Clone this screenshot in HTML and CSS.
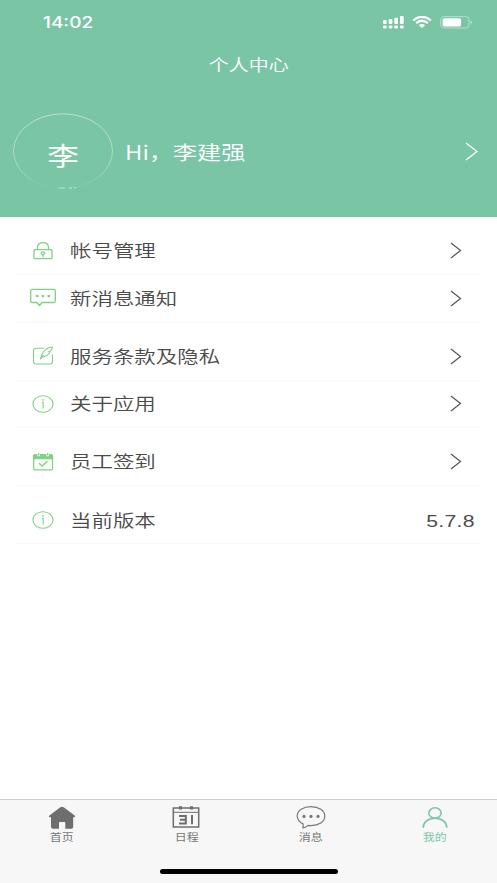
FILE: index.html
```html
<!DOCTYPE html>
<html lang="zh-CN">
<head>
<meta charset="utf-8">
<title>个人中心</title>
<link rel="stylesheet" href="styles.css">
</head>
<body>
<div class="app">
  <header class="header">
    <div class="status">
      <span class="wide left time">14:02</span>
      <div class="status-icons">
        <svg class="signal" width="22" height="13" viewBox="0 0 22 13" fill="#fff"><rect x="0" y="4" width="3.7" height="4" rx="1"/><rect x="5.7" y="3" width="3.7" height="5" rx="1"/><rect x="11.3" y="1.7" width="3.7" height="6.3" rx="1"/><rect x="17" y="0" width="3.7" height="8" rx="1"/><rect x="0" y="9.4" width="3.7" height="3.2" rx="1"/><rect x="5.7" y="9.4" width="3.7" height="3.2" rx="1"/><rect x="11.3" y="9.4" width="3.7" height="3.2" rx="1"/><rect x="17" y="9.4" width="3.7" height="3.2" rx="1"/></svg>
        <svg class="wifi" width="20" height="13" viewBox="0 0 20 13"><path d="M1.2 4.5Q10-3 18.8 4.5M4.2 7.1Q10 2.4 15.8 7.1" fill="none" stroke="#fff" stroke-width="2.2"/><path d="M6.8 9.2Q10 6.6 13.2 9.2L10 12Z" fill="#fff"/></svg>
        <svg class="battery" width="33" height="13" viewBox="0 0 33 13"><rect x=".6" y=".6" width="28.4" height="11.4" rx="3.3" fill="none" stroke="#b6dfcf" stroke-width="1"/><rect x="2.6" y="2.2" width="18.5" height="8.2" rx="1.6" fill="#fff"/><path d="M30.5 4.3q3 2 0 4z" fill="#b6dfcf"/></svg>
      </div>
    </div>
    <h1 class="title"><span class="wide">个人中心</span></h1>
    <div class="profile">
      <div class="avatar">
        <svg class="ring" width="101" height="76" viewBox="0 0 101 76" fill="none"><ellipse cx="50" cy="38" rx="49.5" ry="37.2" stroke="url(#fade)"/><path d="M46 75h6M56 75h3M61 74.7h2" stroke="#c2e4d7"/><defs><linearGradient id="fade" x1="0" y1="0" x2="0" y2="1"><stop offset="0" stop-color="#b8e0d0"/><stop offset=".75" stop-color="#a6d8c4"/><stop offset="1" stop-color="#7bc5a7"/></linearGradient></defs></svg>
        <span class="wide">李</span>
      </div>
      <span class="wide left greeting">Hi，李建强</span>
      <svg class="arrow light" width="13" height="19" viewBox="0 0 13 19"><path d="M1 1L12 9.4L1 18"/></svg>
    </div>
  </header>
  <main class="menu">
    <section class="group">
      <div class="row">
        <svg class="icon" width="28" height="22" viewBox="0 0 28 22"><rect x="5" y="9.7" width="18" height="9" rx="1"/><path d="M8.5 9.7V7.8C8.5 4.4 10.7 2.6 14 2.6S19.5 4.4 19.5 7.8V9.7M14 14.7v2.5"/><ellipse cx="14" cy="13.3" rx="1.8" ry="1.4"/></svg>
        <span class="wide left label">帐号管理</span>
        <svg class="arrow" width="12" height="17" viewBox="0 0 12 17"><path d="M1 1L10.5 8.5L1 16"/></svg>
      </div>
      <div class="row">
        <svg class="icon" width="28" height="22" viewBox="0 0 28 22"><path d="M3.5 2.4H24.5Q26.3 2.4 26.3 4.2V13.8Q26.3 15.5 24.5 15.5H13.4L10.4 18.5L7.7 15.5H3.5Q1.7 15.5 1.7 13.8V4.2Q1.7 2.4 3.5 2.4Z"/><g class="solid"><circle cx="8.2" cy="9.1" r="1.4"/><circle cx="14" cy="9.1" r="1.4"/><circle cx="19.8" cy="9.1" r="1.4"/></g></svg>
        <span class="wide left label">新消息通知</span>
        <svg class="arrow" width="12" height="17" viewBox="0 0 12 17"><path d="M1 1L10.5 8.5L1 16"/></svg>
      </div>
    </section>
    <section class="group">
      <div class="row">
        <svg class="icon thin" width="28" height="22" viewBox="0 0 28 22"><path d="M15 3.2H7.2Q4.5 3.2 4.5 5.5V16.5Q4.5 19 7.2 19H20.7Q23.5 19 23.5 16.5V9.5"/><path d="M11.2 14.3C12.5 9 15.5 2.4 23.2 2Q23.5 4 21.5 6L20 6.5L20.7 7.5C18.5 11 15.5 12 12.3 12.2M11.2 14.3L14.5 10"/></svg>
        <span class="wide left label">服务条款及隐私</span>
        <svg class="arrow" width="12" height="17" viewBox="0 0 12 17"><path d="M1 1L10.5 8.5L1 16"/></svg>
      </div>
      <div class="row">
        <svg class="icon thin" width="28" height="22" viewBox="0 0 28 22"><ellipse cx="14" cy="11" rx="10" ry="8.3"/><path d="M13 9.2H14.2V15.4"/><circle class="solid" cx="14" cy="6.8" r=".9"/></svg>
        <span class="wide left label">关于应用</span>
        <svg class="arrow" width="12" height="17" viewBox="0 0 12 17"><path d="M1 1L10.5 8.5L1 16"/></svg>
      </div>
    </section>
    <section class="group">
      <div class="row">
        <svg class="icon" width="28" height="22" viewBox="0 0 28 22"><rect x="4.7" y="3.8" width="18.8" height="15" rx="1.2"/><path class="solid" d="M4 5Q4 3.2 5.5 3.2H22.5Q24.1 3.2 24.1 5V8.2H4Z"/><path d="M9.5 2V5.2M18.7 2V5.2" stroke="#fff" stroke-width="2.6"/><path d="M9.5 2V4.6M18.7 2V4.6"/><path d="M10 12.3L13 15L18.5 10.3" stroke-width="1.5"/></svg>
        <span class="wide left label">员工签到</span>
        <svg class="arrow" width="12" height="17" viewBox="0 0 12 17"><path d="M1 1L10.5 8.5L1 16"/></svg>
      </div>
    </section>
    <section class="group">
      <div class="row">
        <svg class="icon thin" width="28" height="22" viewBox="0 0 28 22"><ellipse cx="14" cy="11" rx="10" ry="8.3"/><path d="M13 9.2H14.2V15.4"/><circle class="solid" cx="14" cy="6.8" r=".9"/></svg>
        <span class="wide left label">当前版本</span>
        <span class="wide right version">5.7.8</span>
      </div>
    </section>
  </main>
  <footer class="bottom">
    <nav class="tabs">
      <div class="tab">
        <svg width="30" height="24" viewBox="0 0 30 24"><path d="M15 .7Q15.8.7 17 1.5L27.7 9.6Q29 11 27 11.2H26.2V21Q26.2 22.7 24.3 22.7H18.3V17Q18.3 16 17.3 16H13Q12 16 12 17V22.7H6Q4 22.7 4 21V11.2H3Q1 11 2.4 9.6L13 1.5Q14.2.7 15 .7Z" fill="#6e6e6e"/></svg>
        <span class="wide">首页</span>
      </div>
      <div class="tab">
        <svg width="30" height="24" viewBox="0 0 30 24" fill="none" stroke="#6e6e6e"><rect x="2.3" y="2" width="25.4" height="19" stroke-width="1.5"/><path d="M2 6.3H28" stroke-width="1"/><path d="M9.5.3V3.6M20.5.3V3.6" stroke-width="3"/><path d="M8 9.9H14.8V17.5H8M9 13.7H14.8M21 9V18.2" stroke-width="2"/></svg>
        <span class="wide">日程</span>
      </div>
      <div class="tab">
        <svg width="30" height="24" viewBox="0 0 30 24" fill="none" stroke="#777" stroke-width="1.2"><path d="M7.2 18.1C3.6 16.1 1.2 13.5 1.2 10C1.2 4.3 7.3.7 15 .7S28.8 4.5 28.8 10.2S22.8 19.6 15 19.6Q13.4 19.6 12.2 19.4Q9.9 21.5 7 22Z"/><g fill="#777" stroke="none"><circle cx="8" cy="10.4" r="1.6"/><circle cx="15" cy="10.4" r="1.6"/><circle cx="22" cy="10.4" r="1.6"/></g></svg>
        <span class="wide">消息</span>
      </div>
      <div class="tab active">
        <svg width="30" height="24" viewBox="0 0 30 24" fill="none" stroke="#7bc5a7" stroke-width="1.6"><ellipse cx="15" cy="7" rx="6.2" ry="5.2"/><path d="M3.2 21.8C3.2 16.3 8 12.3 15 12.3S26.8 16.3 26.8 21.8"/></svg>
        <span class="wide">我的</span>
      </div>
    </nav>
    <div class="home-bar"></div>
  </footer>
</div>
</body>
</html>
```
FILE: styles.css
```css
* { box-sizing: border-box; }
body {
  margin: 0;
  background: #fff;
  font-family: "Liberation Sans", "Noto Sans CJK SC", sans-serif;
  font-weight: 400;
}
svg { display: block; flex: none; }
.app { height: 883px; display: flex; flex-direction: column; overflow: hidden; }

/* Lettering is wider than it is tall throughout */
.wide { display: inline-block; transform: scaleX(1.219); white-space: nowrap; }
.left { transform-origin: left center; }
.right { transform-origin: right center; }

.header { height: 217px; flex: none; background: #7bc5a7; color: #fff; }
.status { height: 44px; display: flex; justify-content: space-between; padding: 0 24px 0 43px; align-items: center; }
.time { font: 500 15.6px/20px Inter, sans-serif; margin-top: 1px; }
.status-icons { display: flex; gap: 8px; align-items: center; }
.signal { margin-right: -1px; }
.title { height: 42px; margin: 0; display: flex; justify-content: center; align-items: center; font-size: 16.4px; font-weight: 350; }
.title .wide { margin-bottom: 3px; }
.profile { height: 76px; margin-top: 27px; padding: 0 19px 0 13px; display: flex; align-items: center; }
.avatar { width: 100px; height: 76px; display: grid; place-items: center; font-size: 26px; }
.avatar > * { grid-area: 1 / 1; }
.avatar .wide { margin-top: 6px; }
.greeting { margin: 2px 0 0 12px; font: 350 19.8px/28px "Noto Sans CJK SC", sans-serif; }
.arrow { margin-left: auto; fill: none; stroke: #555; stroke-width: 1.2; }
.arrow.light { stroke: #fff; }

.menu { flex: 1; padding: 10.8px 17px 0; }
.group { margin-bottom: 10.7px; }
.row { height: 47.4px; display: flex; align-items: center; padding: 0 18px 0 12px; border-bottom: 1px solid #f9f9f9; }
.icon { fill: none; stroke: #7fd184; stroke-width: 1.3; }
.icon.thin { stroke-width: 1.1; }
.icon .solid { fill: #7fd184; stroke: none; }
.label { margin: 0 0 2px 13px; color: #4a4a4a; font-size: 17.6px; font-weight: 350; }
.version { margin: 2px -13px 0 auto; color: #4c4c4c; font-size: 17.4px; letter-spacing: .2px; }

.bottom { height: 84px; flex: none; background: #f7f7f7; border-top: 1px solid #cfcfcf; }
.tabs { display: flex; height: 69px; padding-top: 6px; }
.tab { flex: 1; display: flex; flex-direction: column; align-items: center; color: #777; font-size: 9.8px; line-height: 14px; }
.tab .wide { margin-top: 1px; }
.tab.active { color: #7bc5a7; }
.home-bar { width: 178px; height: 5px; margin: 0 auto; border-radius: 3px; background: #000; }
```
